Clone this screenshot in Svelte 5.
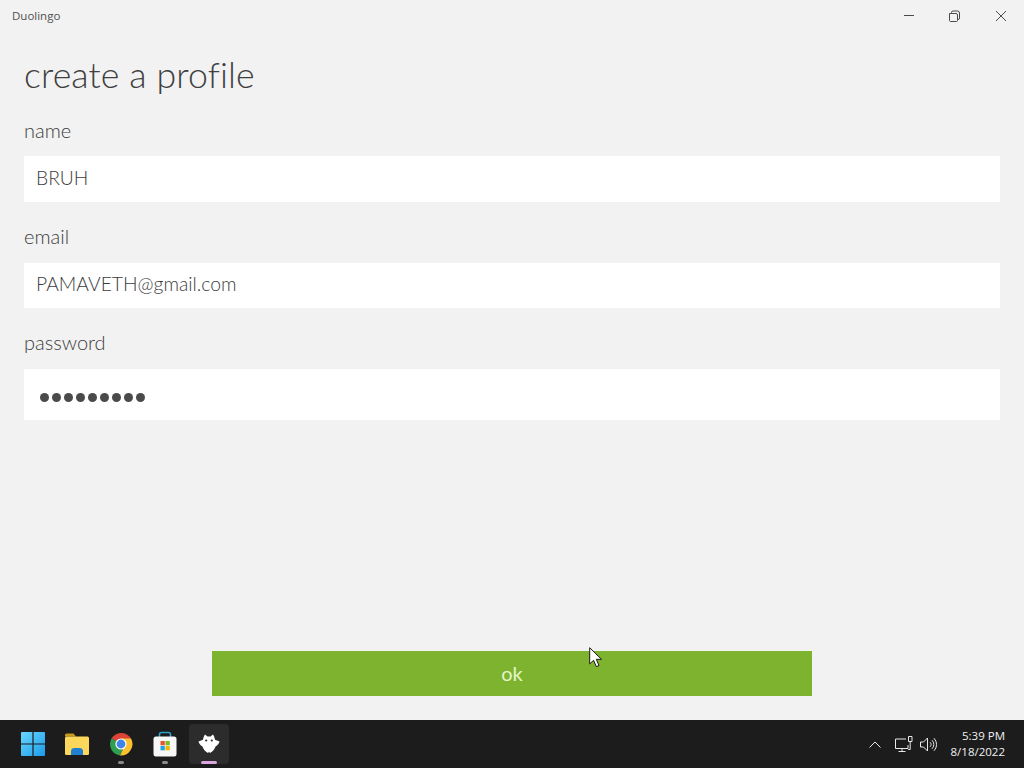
<script>
  const dots = Array.from({ length: 9 });
</script>

<div class="window">
  <header class="titlebar">
    <span class="app-name">Duolingo</span>
    <div class="controls">
      <svg class="ctl" viewBox="0 0 46 32"><path d="M18 15.500h10" stroke="#4a4a4a" fill="none"/></svg>
      <svg class="ctl" viewBox="0 0 46 32"><path d="M17.500 13.500h6.500a1.500 1.500 0 0 1 1.500 1.500v5.500a1 1 0 0 1-1 1h-6a1 1 0 0 1-1-1v-7z M19.500 13.500v-1a1.500 1.500 0 0 1 1.500-1.500h4.500a2 2 0 0 1 2 2v5a1.500 1.500 0 0 1-1.500 1.500h-1" stroke="#4a4a4a" fill="none"/></svg>
      <svg class="ctl" viewBox="0 0 46 32"><path d="M18 11l10 10M28 11l-10 10" stroke="#4a4a4a" fill="none"/></svg>
    </div>
  </header>

  <main class="content">
    <h1>create a profile</h1>
    <div class="label first">name</div>
    <div class="field">BRUH</div>
    <div class="label">email</div>
    <div class="field email">PAMAVETH@gmail.com</div>
    <div class="label">password</div>
    <div class="field pw">
      {#each dots as _}<span class="dot"></span>{/each}
    </div>
    <div class="spacer"></div>
    <div class="actions"><div class="ok">ok</div></div>
    <svg class="cursor" viewBox="0 0 13 21" width="13" height="21"><path d="M.7.7v16.200l3.900-3.600 2.700 6.300 2.700-1.100-2.700-6.200h5.200z" fill="#fff" stroke="#1a1a1a" stroke-width="1"/></svg>
  </main>

  <footer class="taskbar">
    <div class="apps">
      <div class="app win">
        <svg viewBox="0 0 24 24" width="24" height="24">
          <defs>
            <linearGradient id="win" x1="0" y1="0" x2="1" y2="1"><stop offset="0" stop-color="#6ad6fa"/><stop offset="1" stop-color="#1a9cec"/></linearGradient>
          </defs>
          <path d="M0 1a1 1 0 0 1 1-1h10.400v11.400H0zM12.600 0H23a1 1 0 0 1 1 1v10.400H12.600zM0 12.600h11.400V24H1a1 1 0 0 1-1-1zM12.600 12.600H24V23a1 1 0 0 1-1 1H12.600z" fill="url(#win)"/>
        </svg>
      </div>
      <div class="app">
        <svg viewBox="0 0 26 24" width="26" height="24">
          <path d="M1 3a1.500 1.500 0 0 1 1.500-1.500h7l2.500 3h-11z" fill="#c99a1c"/>
          <rect x="1" y="4.500" width="24" height="18.500" rx="1.500" fill="#fbd75b"/>
          <path d="M7 23v-4.500a3 3 0 0 1 3-2.500h6a3 3 0 0 1 3 2.500V23z" fill="#1f7fd0"/>
        </svg>
      </div>
      <div class="app">
        <svg viewBox="0 0 24 24" width="24" height="24">
          <path d="M12 12 2.500 6.500A11.500 11.500 0 0 1 22 6.500z" fill="#dc4437"/>
          <path d="M2.500 6.500A11.500 11.500 0 0 0 11 23.500l5-10z" fill="#2f9e4f"/>
          <path d="M12 6.500h10A11.500 11.500 0 0 1 11 23.500L16 13z" fill="#fbc02d"/>
          <circle cx="12" cy="12" r="5.600" fill="#fff"/>
          <circle cx="12" cy="12" r="4.400" fill="#3f83e8"/>
        </svg>
        <span class="run"></span>
      </div>
      <div class="app">
        <svg viewBox="0 0 24 26" width="24" height="26">
          <path d="M6.500 7V3.500a2 2 0 0 1 2-2h7a2 2 0 0 1 2 2V7" fill="none" stroke="#2aa3c8" stroke-width="1.600"/>
          <rect x="0.500" y="5.500" width="23" height="20" rx="2.500" fill="#f7f7f7"/>
          <rect x="7.500" y="10" width="4.300" height="4.300" fill="#e8542f"/>
          <rect x="12.500" y="10" width="4.300" height="4.300" fill="#7db928"/>
          <rect x="7.500" y="15" width="4.300" height="4.300" fill="#1ea4e9"/>
          <rect x="12.500" y="15" width="4.300" height="4.300" fill="#f7b500"/>
        </svg>
        <span class="run"></span>
      </div>
      <div class="app active">
        <svg viewBox="0 0 22 20" width="22" height="20">
          <path d="M.5 7.500 5 5.800C5.300 3 6.500 1.500 7 .5l2.500 2h3L15 .5c.5 1 1.700 2.500 2 5.300l4.500 1.700c-.5 2-1.900 3.900-3.800 4.700-1 3-3 5.300-5.700 6.800l-1-1.300-1 1.300c-2.700-1.500-4.700-3.800-5.700-6.800C2.400 11.400 1 9.500.5 7.500z" fill="#fff"/>
          <circle cx="8.200" cy="6.500" r="1.100" fill="#2b2b2b"/>
          <circle cx="13.800" cy="6.500" r="1.100" fill="#2b2b2b"/>
        </svg>
        <span class="run long"></span>
      </div>
    </div>
    <div class="tray">
      <svg class="tray-icon chev" viewBox="0 0 12 7" width="12" height="7"><path d="M.5 6.500 6 1l5.500 5.500" fill="none" stroke="#e8e8e8"/></svg>
      <svg class="tray-icon net" viewBox="0 0 18 16" width="18" height="16"><path d="M11 3H.5v9.500H13V9M7 12.500V15M3.500 15.500h7" fill="none" stroke="#e8e8e8"/><path d="M13.500.5h3.500v5h-3.500zM15.200 5.500v8h-2" fill="none" stroke="#e8e8e8"/></svg>
      <svg class="tray-icon" viewBox="0 0 17 15" width="17" height="15"><path d="M.5 5h3l4-4v13l-4-4h-3zM10 5.200a3 3 0 0 1 0 4.600M12 3.200a6 6 0 0 1 0 8.600M14 1.200a9 9 0 0 1 0 12.600" fill="none" stroke="#e8e8e8"/></svg>
      <div class="clock"><span>5:39 PM</span><span>8/18/2022</span></div>
    </div>
  </footer>
</div>

<style>
  :global(body) { margin: 0; }
  .window {
    width: 1024px; height: 768px; display: flex; flex-direction: column;
    background: #f2f2f2; overflow: hidden; color: #4a4a4a;
    font-family: "Lato", "Open Sans", sans-serif;
  }
  .titlebar { height: 32px; flex: none; display: flex; align-items: center; justify-content: space-between; }
  .app-name { margin: -2px 0 0 12px; font: 11.500px "Open Sans", sans-serif; color: #505050; }
  .controls { display: flex; }
  .ctl { width: 46px; height: 32px; display: block; }
  .content { flex: 1; position: relative; display: flex; flex-direction: column; padding: 0 24px 24px; min-height: 0; }
  h1 { margin: 21px 0 0; height: 44px; font-size: 35.700px; line-height: 44px; font-weight: 300; color: #404040; letter-spacing: .1px; }
  .label { height: 26px; margin: 21px 0 14px; font-size: 20px; line-height: 26px; color: #3c3c3c; font-weight: 300; }
  .label.first { margin: 20px 0 13px; }
  .field {
    height: 46px; box-sizing: border-box; padding: 0 0 4px 12px; background: #fff; display: flex; align-items: center;
    font-size: 19.300px; font-weight: 300; color: #3c3c3c;
  }
  .email { height: 45px; }
  .pw { height: 51px; gap: 3px; padding: 5px 0 0 16px; }
  .dot { width: 9px; height: 9px; border-radius: 50%; background: #4a4a4a; }
  .spacer { flex: 1; }
  .actions { display: flex; justify-content: center; }
  .ok {
    width: 600px; height: 45px; padding-bottom: 2px; box-sizing: border-box; background: #7db32f; color: #e4f5c8;
    font-size: 20px; display: flex; align-items: center; justify-content: center;
  }
  .cursor { position: absolute; left: 589px; top: 615px; }
  .taskbar {
    height: 48px; flex: none; background: #1c1c1c; display: flex; align-items: center;
    justify-content: space-between; color: #eee;
  }
  .apps { display: flex; padding-left: 13px; gap: 4px; }
  .app { width: 40px; height: 40px; position: relative; display: flex; align-items: center; justify-content: center; border-radius: 4px; }
  .app.win { padding-right: 1px; width: 39px; }
  .app.active { background: #2c2c2c; }
  .run { position: absolute; bottom: 0; left: 17px; width: 6px; height: 3px; border-radius: 2px; background: #8a8a8a; }
  .run.long { left: 12px; width: 16px; background: #d9a6e0; }
  .tray { display: flex; align-items: center; }
  .tray-icon { margin-right: 8px; }
  .chev { margin-right: 7px; }
  .net { margin-left: 7px; margin-right: 7px; }
  .clock {
    display: flex; flex-direction: column; align-items: flex-end; margin: 0 19px 0 6px;
    font: 11.500px/16px "Open Sans", sans-serif; color: #f0f0f0;
  }
</style>
